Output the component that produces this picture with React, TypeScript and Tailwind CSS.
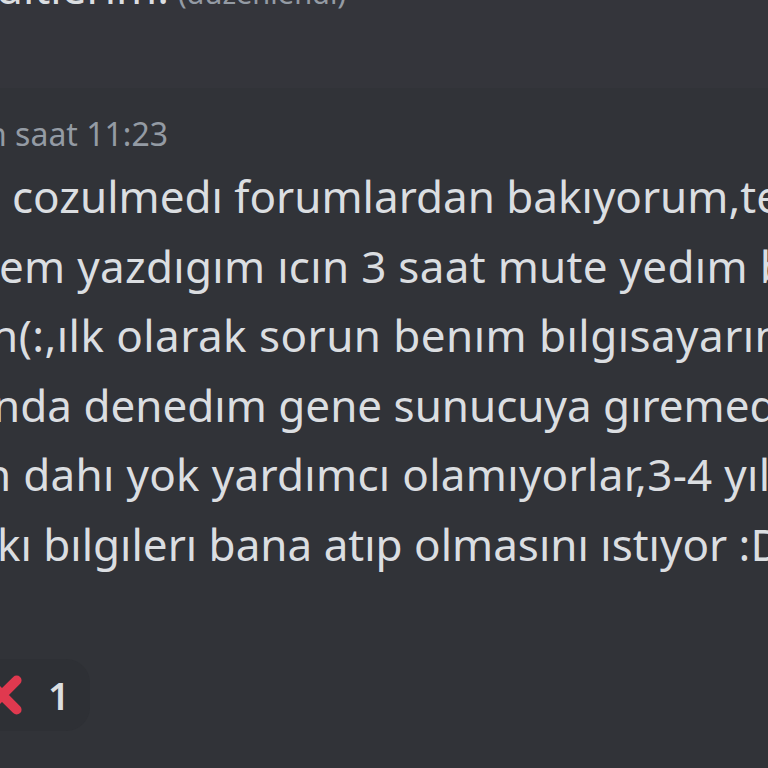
export default function App() {
  const lines = [
    { text: "cozulmedı forumlardan bakıyorum,tek", shift: "ml-[12px] tracking-[0px]" },
    { text: "em yazdıgım ıcın 3 saat mute yedım bu", shift: "ml-[-1px] tracking-[0.3px]" },
    { text: "n(:,ılk olarak sorun benım bılgısayarın", shift: "ml-[-9px] tracking-[0.45px]" },
    { text: "nda denedım gene sunucuya gıremedım", shift: "ml-[-7px] tracking-[0px]" },
    { text: "n dahı yok yardımcı olamıyorlar,3-4 yıl", shift: "ml-[-16px] tracking-[0.3px]" },
    { text: "kı bılgılerı bana atıp olmasını ıstıyor :D", shift: "ml-[-3px] tracking-[0px]" },
  ];

  return (
    <div className="h-[768px] w-[768px] overflow-hidden bg-[#313338] font-['Noto_Sans','Liberation_Sans',sans-serif] text-[#dbdee1]">
      {/* end of the previous message */}
      <div className="h-[88px] overflow-hidden bg-[#34353b]">
        <div className="-mt-[38px] flex items-baseline gap-[9px] whitespace-nowrap">
          <span className="-ml-[4px] text-[44px] leading-[50px]">ditlerim.</span>
          <span className="text-[29px] leading-[50px] text-[#949ba4]">(düzenlendi)</span>
        </div>
      </div>

      <div className="flex flex-col">
        <div className="-ml-[13px] mt-[26px] whitespace-nowrap text-[32px] leading-[40px] text-[#949ba4]">
          n saat 11:23
        </div>
        <div className="mt-[8px] flex flex-col">
          {lines.map((l) => (
            <div key={l.text} className={`whitespace-nowrap text-[44px] leading-[69.5px] ${l.shift}`}>
              {l.text}
            </div>
          ))}
        </div>
        <div className="mt-[80px] flex">
          <div className="-ml-[60px] flex h-[72px] items-center gap-[24px] rounded-[24px] bg-[#2e3035] pl-[40px] pr-[20px]">
            <svg width="44" height="44" viewBox="0 0 36 36" aria-hidden>
              <path
                d="M6 6 L30 30 M30 6 L6 30"
                stroke="#e0394f"
                strokeWidth="8"
                strokeLinecap="round"
              />
            </svg>
            <span className="text-[38px] font-semibold leading-none text-[#dbdee1]">1</span>
          </div>
        </div>
      </div>
    </div>
  );
}
